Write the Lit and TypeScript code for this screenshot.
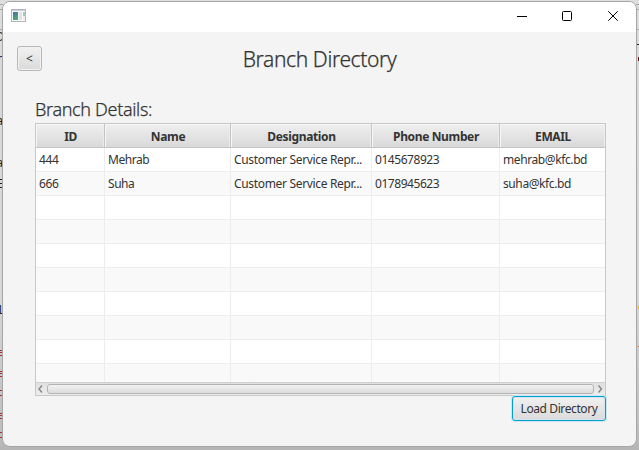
import { LitElement, html, css, svg } from "lit";
import { customElement } from "lit/decorators.js";

const COLUMNS = ["ID", "Name", "Designation", "Phone Number", "EMAIL"];
const ROWS: string[][] = [
  ["444", "Mehrab", "Customer Service Repr...", "0145678923", "mehrab@kfc.bd"],
  ["666", "Suha", "Customer Service Repr...", "0178945623", "suha@kfc.bd"],
];
const VISIBLE_ROWS = 10;

@customElement("branch-table")
class BranchTable extends LitElement {
  static styles = css`
    :host {
      display: flex;
      flex-direction: column;
      box-sizing: border-box;
      width: 571px;
      height: 273px;
      border: 1px solid #c8c8c8;
      background: #fff;
      color: #333;
      font-size: 12px;
    }
    .row {
      display: grid;
      grid-template-columns: 69px 126px 141px 128px 105px;
      flex: none;
    }
    .head {
      height: 24px;
      font-weight: 700;
    }
    .th {
      box-sizing: border-box;
      height: 24px;
      line-height: 24px;
      padding: 1px 0 0 1px;
      text-align: center;
      border-right: 1px solid #c3c3c3;
      border-bottom: 1px solid #c3c3c3;
      background: linear-gradient(#efefef, #d9d9d9);
      box-shadow: inset 1px 1px 0 #f7f7f7, inset -1px 0 0 #ececec;
      white-space: nowrap;
    }
    .th:last-child {
      border-right: 0;
    }
    .th span {
      letter-spacing: -0.36px;
    }
    .body {
      flex: 1;
      min-height: 0;
      overflow: hidden;
    }
    .td {
      box-sizing: border-box;
      height: 24px;
      line-height: 24px;
      padding-left: 3px;
      border-right: 1px solid #ededed;
      border-bottom: 1px solid #ededed;
      white-space: nowrap;
      overflow: hidden;
    }
    .td:last-child {
      border-right: 0;
    }
    .odd {
      background: #f9f9f9;
    }
    .c0 { letter-spacing: -0.4px; }
    .c1 { letter-spacing: -0.45px; }
    .c2 { letter-spacing: -0.33px; }
    .c3 { letter-spacing: -0.45px; }
    .c4 { letter-spacing: -0.4px; }
    .scroll {
      box-sizing: border-box;
      flex: none;
      height: 13px;
      border-top: 1px solid #d0d0d0;
      background: linear-gradient(#e0e0e0, #ededed);
      display: flex;
      align-items: center;
      justify-content: space-between;
    }
    .thumb {
      box-sizing: border-box;
      width: 547px;
      height: 10px;
      border: 1px solid #b3b3b3;
      border-radius: 3px;
      background: linear-gradient(#f2f2f2, #dcdcdc);
    }
    svg {
      display: block;
      flex: none;
    }
  `;

  render() {
    const rows = Array.from({ length: VISIBLE_ROWS }, (_, i) => ROWS[i] ?? []);
    const arrow = (d: string) =>
      html`<svg width="11" height="12" viewBox="0 0 11 12">
        ${svg`<path d=${d} fill="none" stroke="#868686" stroke-width="1.4" />`}
      </svg>`;
    return html`
      <div class="row head">
        ${COLUMNS.map((c) => html`<div class="th"><span>${c}</span></div>`)}
      </div>
      <div class="body">
        ${rows.map(
          (r, i) => html`<div class="row ${i % 2 ? "odd" : ""}">
            ${COLUMNS.map((_, j) => html`<div class="td c${j}">${r[j] ?? ""}</div>`)}
          </div>`,
        )}
      </div>
      <div class="scroll">
        ${arrow("M6 2.5 L3 6 L6 9.5")}
        <div class="thumb"></div>
        ${arrow("M4.5 2.5 L7.5 6 L4.5 9.5")}
      </div>
    `;
  }
}

@customElement("app-root")
class AppRoot extends LitElement {
  static styles = css`
    :host {
      display: block;
      position: relative;
      width: 639px;
      height: 450px;
      box-sizing: border-box;
      padding: 1px 2px 3px;
      overflow: hidden;
      background: linear-gradient(#dedede 0, #d9d9d9 60px, #d6d6d6 300px, #bcbcbc 440px, #b4b4b4);
      font-family: "Noto Sans", "Open Sans", sans-serif;
      color: #333;
    }
    .behind {
      position: absolute;
      inset: 0;
    }
    .window {
      position: relative;
      box-sizing: border-box;
      width: 635px;
      height: 446px;
      border: 1px solid #a6a6a6;
      border-radius: 8px;
      background: #f4f4f4;
      overflow: hidden;
      display: flex;
      flex-direction: column;
    }
    .titlebar {
      flex: none;
      height: 30px;
      background: #fff;
      display: flex;
      justify-content: space-between;
    }
    .titlebar svg {
      display: block;
    }
    .header {
      height: 61px;
      flex: none;
      display: grid;
      grid-template-columns: 25px 1fr 25px;
      padding: 14px 14px 0;
      box-sizing: border-box;
    }
    .btn {
      box-sizing: border-box;
      font-family: inherit;
      font-size: 12px;
      color: #333;
      padding: 0;
      margin: 0;
      height: 25px;
      border: 1px solid #b7b7b7;
      border-radius: 3px;
      background: linear-gradient(#f1f1f1, #dadada);
      box-shadow: inset 0 0 0 1px #f2f2f2;
      line-height: 23px;
    }
    .load {
      width: 94px;
      border-color: #039ed3;
      box-shadow: 0 0 0 1px #c9e6f1, inset 0 0 0 1px #d3e5ec;
      letter-spacing: -0.4px;
      white-space: nowrap;
    }
    h1, h2 {
      margin: 0;
      font-weight: 300;
      -webkit-text-stroke: 0.25px #333;
    }
    h1 {
      font-size: 21px;
      line-height: 26px;
      text-align: center;
      letter-spacing: -0.38px;
    }
    h2 {
      font-size: 18px;
      line-height: 30px;
      height: 30px;
      padding-top: 1px;
      box-sizing: border-box;
      letter-spacing: -0.34px;
    }
    .content {
      padding: 0 30px 0 32px;
      display: flex;
      flex-direction: column;
    }
    .footer {
      display: flex;
      justify-content: flex-end;
    }
  `;

  private backdrop() {
    const glyphs: [string, number, string][] = [
      ["C", 41, "#333"],
      ["r", 63, "#1c1c70"],
      ["a", 125, "#222"],
      ["a", 167, "#222"],
      ["E", 188, "#222"],
      ["1", 314, "#222"],
    ];
    const red = [350, 352, 355, 371, 373, 376, 390, 395, 413, 415, 418, 432, 437];
    return html`<svg class="behind" width="639" height="450" viewBox="0 0 639 450">
      ${svg`
        <path d="M0 4.5H3M0 9.5H3M636 4.5H639M636 9.5H639M0 29.5H3M636 29.5H639" stroke="#aaa" />
        ${glyphs.map(
          ([t, y, c]) => svg`<text x="3.5" y=${y} text-anchor="end" font-family="Liberation Mono" font-size="12" fill=${c}>${t}</text>`,
        )}
        ${red.map((y) => svg`<path d="M0 ${y + 0.5}H3" stroke="#b52a2a" />`)}
        <path d="M637 44.5H639" stroke="#222" />
        <path d="M638.5 57V61" stroke="#611" />
        <path d="M638.5 306V309" stroke="#d5b321" />
        <path d="M638 346.5H639" stroke="#d45a10" />
      `}
    </svg>`;
  }

  render() {
    return html`
      ${this.backdrop()}
      <div class="window">
        <div class="titlebar">
          <svg width="30" height="30" viewBox="3 2 30 30">
            <defs>
              <linearGradient id="g" x1="0" y1="0" x2="0.4" y2="1">
                <stop offset="0" stop-color="#3f6fa8" />
                <stop offset="1" stop-color="#4fa878" />
              </linearGradient>
            </defs>
            <rect x="11.5" y="9.5" width="14" height="12" fill="#fafafa" stroke="#b3b6bf" />
            <path d="M12 10.5H25" stroke="#c9ccd6" />
            <rect x="13" y="12" width="5" height="8" fill="url(#g)" />
            <rect x="19" y="12" width="3" height="8" fill="#e3e3e3" />
            <rect x="23" y="12" width="2" height="4" fill="#a3cbbd" />
            <rect x="23" y="16" width="2" height="4" fill="#ededed" />
          </svg>
          <svg width="133" height="30" viewBox="503 2 133 30" fill="none" stroke="#000">
            <path d="M517 16.5H527" />
            <rect x="562.5" y="11.5" width="9" height="9" rx="1" />
            <path d="M608.3 11.3L617.7 20.7M617.7 11.3L608.3 20.7" />
          </svg>
        </div>
        <div class="header">
          <button class="btn">&lt;</button>
          <h1>Branch Directory</h1>
        </div>
        <div class="content">
          <h2>Branch Details:</h2>
          <branch-table></branch-table>
          <div class="footer"><button class="btn load">Load Directory</button></div>
        </div>
      </div>
    `;
  }
}
